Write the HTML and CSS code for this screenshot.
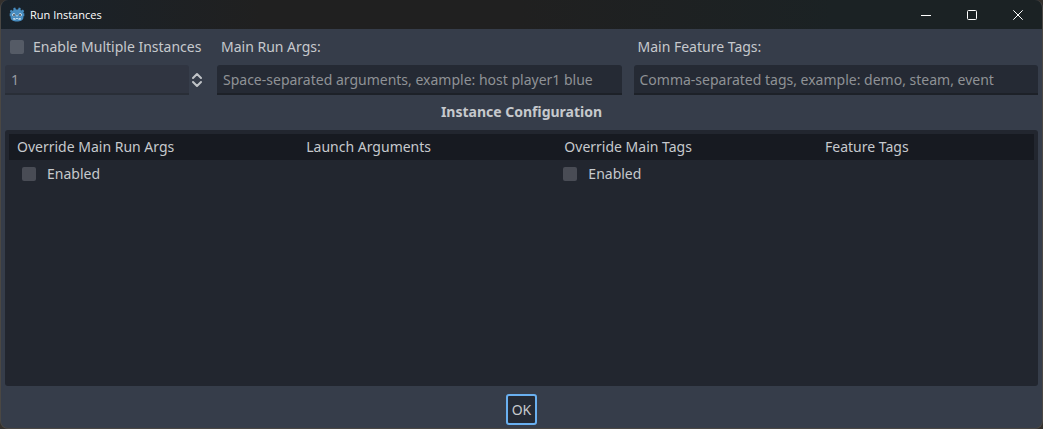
FILE: index.html
```html
<!DOCTYPE html>
<html lang="en">
<head>
<meta charset="utf-8">
<title>Run Instances</title>
<link rel="stylesheet" href="styles.css">
</head>
<body>
<div class="window">
  <header class="titlebar">
    <svg class="logo" viewBox="0 0 16 16" aria-hidden="true">
      <path fill="#478cbf" d="M4.400 1 6.200.500l.8 2h2l.8-2 1.800.5v2l1 .6 1.200-1L15.200 4l-.8 1.500v.8h.9v3h-.9v1.200c0 2.600-3 4-6.400 4s-6.400-1.400-6.400-4V9.300H.7v-3h.9v-.8L.8 4l1.400-1.200 1.200 1 1-.6z"/>
      <circle cx="4.800" cy="7.800" r="1.500" fill="#fff"/>
      <circle cx="11.200" cy="7.800" r="1.500" fill="#fff"/>
      <circle cx="5" cy="7.900" r="1" fill="#34404c"/>
      <circle cx="11" cy="7.900" r="1" fill="#34404c"/>
      <path fill="#fff" d="M7.600 8h.8v1.600h-.8zM4.300 11.200h1.500v.6h1.400v-.6h1.600v.6h1.400v-.6h1.500v1.200H9.300v-.5H6.700v.5H4.300z"/>
    </svg>
    <h1 class="title">Run Instances</h1>
    <div class="controls">
      <button class="control" type="button" aria-label="Minimize"><svg viewBox="0 0 10 10"><path d="M0 5.500h10"/></svg></button>
      <button class="control" type="button" aria-label="Maximize"><svg viewBox="0 0 10 10"><rect x=".5" y=".5" width="9" height="9" rx="1"/></svg></button>
      <button class="control" type="button" aria-label="Close"><svg viewBox="0 0 10 10"><path d="m.3.300 9.400 9.400M9.700.300.300 9.700"/></svg></button>
    </div>
  </header>
  <main class="content">
    <div class="settings">
      <div class="group">
        <label class="check"><input class="box" type="checkbox">Enable Multiple Instances</label>
        <div class="spin">
          <input class="field muted" type="text" value="1" aria-label="Instance count">
          <svg class="arrows" viewBox="0 0 12 16" aria-hidden="true"><path d="M2 6 6 2l4 4M2 10l4 4 4-4"/></svg>
        </div>
      </div>
      <div class="group">
        <label class="caption" for="args">Main Run Args:</label>
        <input class="field" id="args" type="text" placeholder="Space-separated arguments, example: host player1 blue">
      </div>
      <div class="group">
        <label class="caption" for="tags">Main Feature Tags:</label>
        <input class="field" id="tags" type="text" placeholder="Comma-separated tags, example: demo, steam, event">
      </div>
    </div>
    <h2 class="heading">Instance Configuration</h2>
    <div class="panel">
      <table class="instances">
        <thead>
          <tr><th class="override-args">Override Main Run Args</th><th class="launch">Launch Arguments</th><th class="override-tags">Override Main Tags</th><th>Feature Tags</th></tr>
        </thead>
        <tbody>
          <tr>
            <td class="first"><label class="check"><input class="box" type="checkbox">Enabled</label></td><td></td>
            <td><label class="check"><input class="box" type="checkbox">Enabled</label></td><td></td>
          </tr>
        </tbody>
      </table>
    </div>
    <button class="ok" type="button">OK</button>
  </main>
</div>
</body>
</html>
```
FILE: styles.css
```css
* { box-sizing: border-box; }

body {
  margin: 0;
  background: #33302d;
  color: #c6c9cd;
  font: 14px/20px "Noto Sans", sans-serif;
}

input, button { font: inherit; color: inherit; margin: 0; }

.window {
  display: flex;
  flex-direction: column;
  height: 100vh;
  border: solid #4a4743;
  border-width: 0 1px 1px;
  border-radius: 8px;
  background: #363d4a;
  overflow: hidden;
}

.titlebar {
  display: flex;
  align-items: center;
  flex: none;
  height: 29px;
  padding: 0 1px 0 8px;
  background: linear-gradient(90deg, #19222a, #202020 25%, #202020 50%, #1b2224 80%);
  color: #fff;
}

.logo { width: 16px; height: 16px; }

.title {
  margin: 0 auto 0 5px;
  font: 11px/16px "Open Sans", sans-serif;
}

.controls { display: flex; align-self: stretch; }

.control {
  display: flex;
  align-items: center;
  justify-content: center;
  width: 46px;
  padding: 0;
  border: 0;
  background: none;
}

.control svg {
  width: 10px;
  height: 10px;
  fill: none;
  stroke: #fff;
  stroke-width: 1;
}

.content {
  display: flex;
  flex-direction: column;
  flex: 1;
  padding: 4px 4px 3px;
}

.settings {
  display: grid;
  grid-template-columns: 200px 1fr 1fr;
  column-gap: 12px;
}

.group { display: flex; flex-direction: column; }

.check, .caption {
  display: flex;
  align-items: center;
  height: 28px;
  padding-left: 5px;
  white-space: nowrap;
}

.caption { padding-left: 4px; }

.group .check, .group .caption { margin-bottom: 4px; }

.box {
  appearance: none;
  flex: none;
  width: 14px;
  height: 14px;
  margin-right: 9px;
  border-radius: 2px;
  background: #555b66;
}

.field {
  width: 100%;
  height: 30px;
  padding: 0 6px;
  border: 0;
  border-bottom: 2px solid #1d2128;
  border-radius: 3px 3px 0 0;
  background: #252a34;
}

.field::placeholder { color: #8f9296; opacity: 1; }

.muted {
  background: #303541;
  border-color: #292e37;
  color: #989ba0;
}

.spin { display: flex; align-items: center; padding-right: 2px; }

.arrows {
  flex: none;
  width: 12px;
  height: 16px;
  margin-left: 2px;
  fill: none;
  stroke: #c1c4c8;
  stroke-width: 2;
  stroke-linecap: round;
  stroke-linejoin: round;
}

.heading {
  margin: 7px 0 8px;
  font-size: 14px;
  line-height: 20px;
  text-align: center;
}

.panel {
  flex: 1;
  padding: 4px;
  border-radius: 3px;
  background: #22262f;
}

.instances {
  width: 100%;
  table-layout: fixed;
  border-collapse: collapse;
}

.instances th {
  height: 26px;
  padding: 0 0 0 8px;
  background: #171a21;
  font-weight: 400;
  white-space: nowrap;
}

.instances td { padding: 0 0 0 2px; }
.instances td.first { padding-left: 8px; }
.instances .box { margin-right: 11px; background: #494c55; }

.override-args { width: 16%; }
.launch { width: 37.4%; }
.override-tags { width: 13.2%; }

.ok {
  align-self: center;
  height: 31px;
  margin-top: 8px;
  padding: 0 4px;
  border: 2px solid #6ab0f0;
  border-radius: 3px;
  background: #252a34;
}
```
